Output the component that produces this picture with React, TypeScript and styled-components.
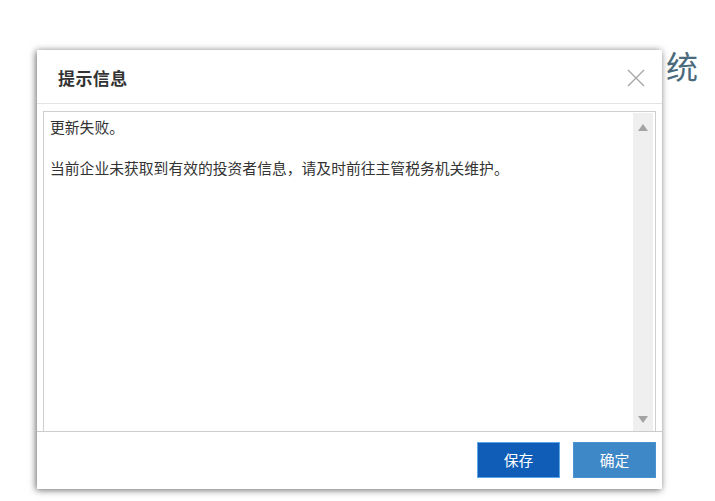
import React from "react";
import styled, { createGlobalStyle } from "styled-components";

const Global = createGlobalStyle`
  html, body { margin: 0; padding: 0; background: #ffffff; }
  body { font-family: "Liberation Sans", "Noto Sans CJK SC", sans-serif; }
  #root { width: 715px; height: 501px; position: relative; overflow: hidden; }
`;

const Page = styled.div`
  width: 715px;
  height: 501px;
  display: flex;
  justify-content: flex-end;
  align-items: flex-start;
  padding: 45px 17px 0 0;
  box-sizing: border-box;
`;

const PageTitle = styled.h1`
  margin: 0;
  font-family: "Noto Sans CJK SC", sans-serif;
  font-weight: 400;
  font-size: 32px;
  line-height: 40px;
  color: #4b6b7c;
`;

const Dialog = styled.div`
  position: absolute;
  left: 37px;
  top: 50px;
  width: 625px;
  height: 439px;
  background: #ffffff;
  box-shadow: -1px 1px 7px rgba(0, 0, 0, 0.6);
  display: flex;
  flex-direction: column;
  font-family: "Noto Sans CJK SC", sans-serif;
  color: #333333;
`;

const Header = styled.div`
  height: 54px;
  flex: none;
  border-bottom: 1px solid #e3e3e3;
  display: flex;
  align-items: center;
  justify-content: space-between;
  padding: 2px 17px 0 21px;
  box-sizing: border-box;
`;

const Title = styled.h2`
  margin: 0;
  font-size: 17px;
  font-weight: 700;
  color: #333333;
  letter-spacing: 0.4px;
`;

const CloseButton = styled.button`
  border: 0;
  background: transparent;
  padding: 0;
  width: 18px;
  height: 18px;
  display: flex;
  align-items: center;
  justify-content: center;
  cursor: pointer;
`;

const Body = styled.div`
  flex: 1;
  padding: 7px 6px 0 6px;
  display: flex;
  min-height: 0;
`;

const MessageBox = styled.div`
  flex: 1;
  border: 1px solid #cfcfcf;
  border-bottom: 0;
  display: flex;
  min-height: 0;
`;

const MessageText = styled.div`
  flex: 1;
  padding: 5px 6px;
  font-size: 14.8px;
  line-height: 20.5px;
  color: #333333;
  white-space: pre-wrap;
`;

const Scrollbar = styled.div`
  width: 20px;
  margin: 1px 2px 0 0;
  background: #efefef;
  display: flex;
  flex-direction: column;
  justify-content: space-between;
  align-items: center;
  padding: 11px 0 8px;
  box-sizing: border-box;
`;

const Arrow = styled.div<{ $down?: boolean }>`
  width: 0;
  height: 0;
  border-left: 5px solid transparent;
  border-right: 5px solid transparent;
  ${(p) =>
    p.$down
      ? "border-top: 7px solid #a3a3a3;"
      : "border-bottom: 7px solid #a3a3a3;"}
`;

const Footer = styled.div`
  height: 58px;
  flex: none;
  border-top: 1px solid #cccccc;
  display: flex;
  justify-content: flex-end;
  align-items: center;
  gap: 13px;
  padding: 0 6px 2px 0;
  box-sizing: border-box;
`;

const Button = styled.button<{ $primary?: boolean }>`
  width: 83px;
  height: 36px;
  border: 1px solid ${(p) => (p.$primary ? "#5aa6e6" : "#4d92d0")};
  background: ${(p) => (p.$primary ? "#0f5db6" : "#3f88c8")};
  color: #ffffff;
  font-family: "Noto Sans CJK SC", sans-serif;
  font-size: 14.8px;
  cursor: pointer;
  padding: 0;
`;

export default function App() {
  return (
    <>
      <Global />
      <Page>
        <PageTitle>统</PageTitle>
      </Page>
      <Dialog>
        <Header>
          <Title>提示信息</Title>
          <CloseButton aria-label="关闭">
            <svg width="18" height="18" viewBox="0 0 18 18">
              <path d="M1 1 L17 17 M17 1 L1 17" stroke="#a8a8a8" strokeWidth="1.4" fill="none" />
            </svg>
          </CloseButton>
        </Header>
        <Body>
          <MessageBox>
            <MessageText>
              {"更新失败。\n\n当前企业未获取到有效的投资者信息，请及时前往主管税务机关维护。"}
            </MessageText>
            <Scrollbar>
              <Arrow />
              <Arrow $down />
            </Scrollbar>
          </MessageBox>
        </Body>
        <Footer>
          <Button $primary>保存</Button>
          <Button>确定</Button>
        </Footer>
      </Dialog>
    </>
  );
}
